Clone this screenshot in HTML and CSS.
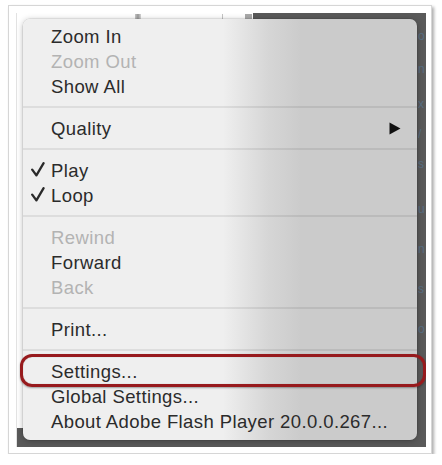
FILE: index.html
```html
<!DOCTYPE html>
<html>
<head>
<meta charset="utf-8">
<link rel="stylesheet" href="styles.css">
</head>
<body>
<div class="card">
  <div class="shot">
    <div class="backdrop">
      <div class="bd-marks">
        <span class="mark mark-a"></span>
        <span class="mark mark-b"></span>
        <span class="mark mark-c"></span>
      </div>
      <div class="bd-links">
        <span class="frag f1">o</span>
        <span class="frag f2">n</span>
        <span class="frag f3">x</span>
        <span class="frag f4">/</span>
        <span class="frag f5">s</span>
        <span class="frag f6">u</span>
        <span class="frag f7">n</span>
        <span class="frag f8">s</span>
        <span class="frag f9">o</span>
      </div>
    </div>
    <div class="menu">
      <div class="item">Zoom In</div>
      <div class="item disabled">Zoom Out</div>
      <div class="item">Show All</div>
      <div class="sep"></div>
      <div class="item sub"><span>Quality</span><svg class="arrow" width="12" height="13" viewBox="0 0 12 13"><path d="M0.5 0.5 L11.5 6.5 L0.5 12.5 Z" fill="#111"/></svg></div>
      <div class="sep"></div>
      <div class="item checked"><svg class="check" width="14" height="15" viewBox="0 0 14 15"><path d="M1.2 7.6 L5.4 13.4 L12.6 1.2" fill="none" stroke="#2a2a2a" stroke-width="2.3" stroke-linecap="round" stroke-linejoin="round"/></svg><span>Play</span></div>
      <div class="item checked"><svg class="check" width="14" height="15" viewBox="0 0 14 15"><path d="M1.2 7.6 L5.4 13.4 L12.6 1.2" fill="none" stroke="#2a2a2a" stroke-width="2.3" stroke-linecap="round" stroke-linejoin="round"/></svg><span>Loop</span></div>
      <div class="sep"></div>
      <div class="item disabled">Rewind</div>
      <div class="item">Forward</div>
      <div class="item disabled">Back</div>
      <div class="sep"></div>
      <div class="item">Print...</div>
      <div class="sep"></div>
      <div class="item">Settings...</div>
      <div class="item">Global Settings...</div>
      <div class="item">About Adobe Flash Player 20.0.0.267...</div>
    </div>
    <div class="ring"></div>
  </div>
</div>
</body>
</html>
```
FILE: styles.css
```css
html, body {
  margin: 0;
  padding: 0;
  background: #ffffff;
}

body {
  font-family: "Liberation Sans", Arial, sans-serif;
}

.card {
  box-sizing: border-box;
  margin: 5px 0 0 8px;
  width: 424px;
  height: 449px;
  padding: 7px 5px 5px 7px;
  background: #ffffff;
  border: 1px solid #d6d6d6;
  box-shadow: 2px 2px 3px rgba(0, 0, 0, 0.32);
}

.shot {
  position: relative;
  width: 410px;
  height: 434px;
  overflow: hidden;
  border-left: 1px solid #e2e2e2;
  box-sizing: border-box;
}

.backdrop {
  height: 100%;
  display: grid;
  grid-template-columns: 236px 1fr 9px;
  grid-template-rows: 6px 1fr 19px;
  background:
    linear-gradient(#5a5a5a, #5a5a5a) left bottom / 100% 19px no-repeat,
    linear-gradient(to right, #ffffff 236px, #5a5a5a 236px);
}

.bd-marks {
  grid-column: 1;
  grid-row: 1;
  display: flex;
  align-items: flex-start;
  padding-top: 1px;
}

.mark {
  display: block;
  height: 5px;
}

.mark-a {
  width: 6px;
  margin-left: 118px;
  background: linear-gradient(to right, #c8c8c8, #9a9a9a, #d8d8d8);
}

.mark-b {
  width: 1px;
  margin-left: 81px;
  background: #c4c4c4;
}

.mark-c {
  width: 7px;
  margin-left: 22px;
  background: #a9a9a9;
}

.bd-links {
  grid-column: 3;
  grid-row: 2;
  display: flex;
  flex-direction: column;
  align-items: flex-start;
  padding-left: 1px;
  font-size: 12px;
  line-height: 14px;
  color: #58758f;
  opacity: 0.8;
}

.frag {
  display: block;
}

.f1 { margin-top: 10px; }
.f2 { margin-top: 19px; }
.f3 { margin-top: 21px; }
.f4 { margin-top: 16px; }
.f5 { margin-top: 16px; }
.f6 { margin-top: 31px; }
.f7 { margin-top: 26px; }
.f8 { margin-top: 26px; }
.f9 { margin-top: 26px; }

.menu {
  position: absolute;
  left: 6px;
  top: 6px;
  width: 394px;
  height: 421px;
  box-sizing: border-box;
  padding: 5px 0 6px 0;
  border-radius: 7px;
  background: linear-gradient(to right, #efefef 0, #efefef 200px, #d6d6d6 245px, #cbcbcb 278px, #cbcbcb 100%);
  box-shadow: 0 1px 6px rgba(0, 0, 0, 0.28), 0 0 0 0.5px rgba(0, 0, 0, 0.12);
}

.item {
  display: flex;
  align-items: center;
  height: 25px;
  line-height: 25px;
  padding-left: 28px;
  font-size: 18.5px;
  letter-spacing: 0.4px;
  color: #2b2b2b;
  white-space: nowrap;
}

.item.disabled {
  color: #b3b3b3;
}

.item.checked {
  padding-left: 8px;
}

.check {
  width: 14px;
  height: 15px;
  margin-right: 6px;
  margin-top: -2px;
}

.item.sub {
  justify-content: space-between;
  padding-right: 16px;
}

.arrow {
  display: block;
}

.sep {
  height: 2px;
  margin: 7px 0 8px 0;
  background: rgba(0, 0, 0, 0.075);
}

.ring {
  position: absolute;
  left: 3px;
  top: 341px;
  width: 406px;
  height: 33px;
  box-sizing: border-box;
  border: 3.5px solid #971a1d;
  border-radius: 12px;
  box-shadow: 0 1px 2px rgba(0, 0, 0, 0.35), inset 0 0 1px rgba(0, 0, 0, 0.3);
}
```
